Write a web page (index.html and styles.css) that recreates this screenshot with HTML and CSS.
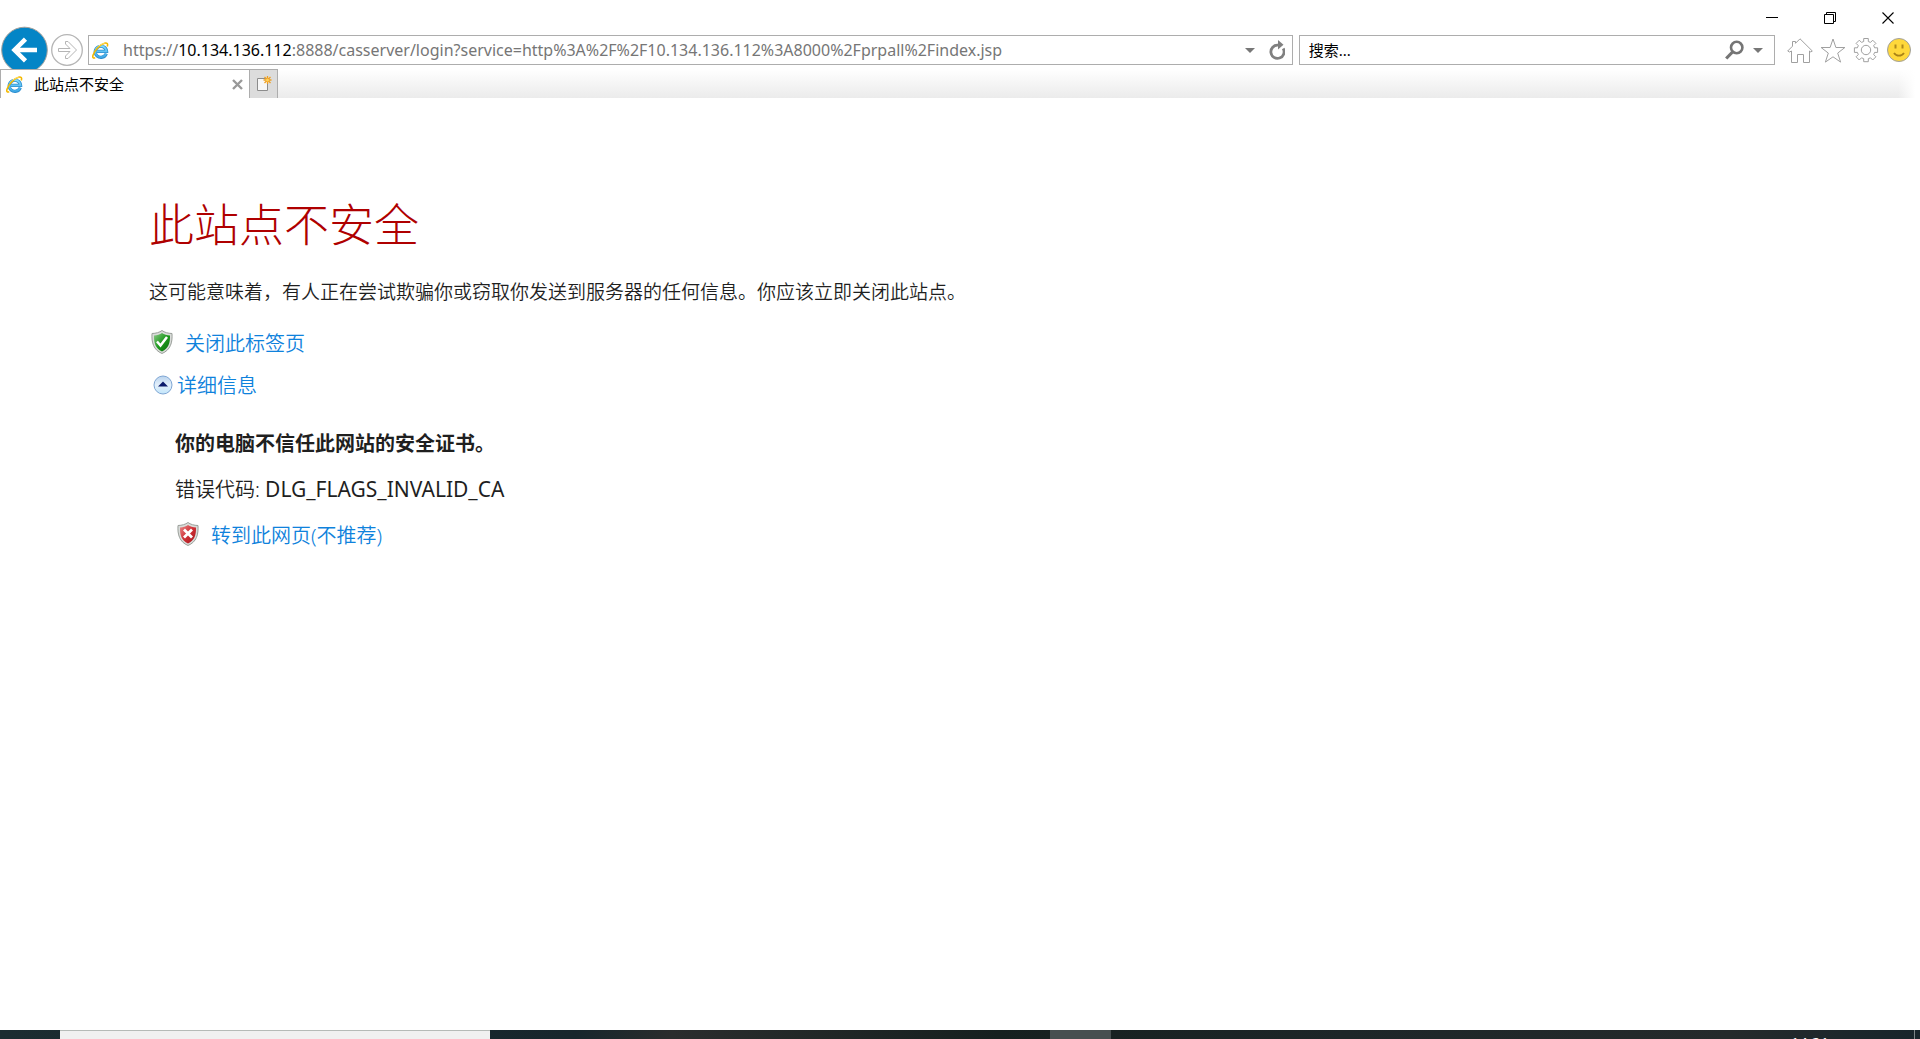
FILE: index.html
```
<!DOCTYPE html>
<html lang="zh-CN">
<head>
  <meta charset="UTF-8">
  <title>此站点不安全</title>
  <link rel="stylesheet" href="styles.css">
</head>
<body>
  <!-- shared icon symbols -->
  <svg class="symbols" aria-hidden="true">
    <defs>
      <linearGradient id="ieBlue" x1="0" y1="0" x2="0" y2="1">
        <stop offset="0" stop-color="#7fdcff"/>
        <stop offset="1" stop-color="#3fa9e6"/>
      </linearGradient>
      <linearGradient id="shieldGreen" x1="0" y1="0" x2="1" y2="1">
        <stop offset="0" stop-color="#8fc98b"/>
        <stop offset="0.5" stop-color="#1d9a1d"/>
        <stop offset="1" stop-color="#0a6b0e"/>
      </linearGradient>
      <linearGradient id="shieldRed" x1="0" y1="0" x2="1" y2="1">
        <stop offset="0" stop-color="#e88a8a"/>
        <stop offset="0.5" stop-color="#cf2f35"/>
        <stop offset="1" stop-color="#a3161c"/>
      </linearGradient>
      <linearGradient id="bubble" x1="0" y1="0" x2="0" y2="1">
        <stop offset="0" stop-color="#b9d3ee"/>
        <stop offset="0.5" stop-color="#e4f0fb"/>
        <stop offset="1" stop-color="#c2e6fb"/>
      </linearGradient>
      <symbol id="ie" viewBox="0 0 17 17">
        <path d="M14.300 11.600A5.700 5.500 0 1 1 14.600 9.400H5" fill="none" stroke="#2f8fd0" stroke-width="3.200"/>
        <path d="M14.200 11.600A5.700 5.500 0 1 1 14.600 9.400H5" fill="none" stroke="url(#ieBlue)" stroke-width="1.800"/>
        <path d="M3.200 15.600C1.400 16.600.3 15.800 1 13.200 2.400 8.500 7.800 2.600 12.600 1.200c2.300-.7 3.600.4 2.700 3.200" fill="none" stroke="#f3b800" stroke-width="1.600"/>
        <path d="M6.500 4.200C8.900 2.400 11.200 1.500 12.800 1.200" fill="none" stroke="#ffe270"/>
      </symbol>
      <symbol id="shield" viewBox="0 0 22 24">
        <path d="M11 .5C8.500 2.400 5 3.400 1 3.500c-.6 9 1.500 16.500 10 20 8.500-3.500 10.600-11 10-20C17 3.400 13.500 2.400 11 .5Z" fill="#d9dcd9" stroke="#9a9f9a"/>
      </symbol>
    </defs>
  </svg>

  <header class="browser">
    <div class="titlebar">
      <button type="button" aria-label="最小化">
        <svg width="12" height="12"><path d="M0 5.500h12" stroke="#000"/></svg>
      </button>
      <button type="button" aria-label="还原">
        <svg width="12" height="12" fill="none" stroke="#000"><path d="M.5 2.500h9v9h-9zM2.500 2.500v-2h9v9h-2"/></svg>
      </button>
      <button type="button" aria-label="关闭">
        <svg width="12" height="12"><path d="M.5.5l11 11M11.500.5l-11 11" stroke="#000" stroke-width="1.100"/></svg>
      </button>
    </div>

    <nav class="toolbar">
      <button type="button" class="back" aria-label="后退">
        <svg width="48" height="48" viewBox="0 0 48 48">
          <circle cx="24.500" cy="24" r="22.800" fill="#0485c6" stroke="#a3a09c"/>
          <path d="M37 24H15.500M25.500 13.200L14.500 24l11 10.800" fill="none" stroke="#fff" stroke-width="4.500"/>
        </svg>
      </button>
      <button type="button" class="forward" aria-label="前进">
        <svg width="32" height="32" viewBox="0 0 32 32" fill="none" stroke="#b5b5b5">
          <circle cx="16" cy="16" r="15.300" stroke-width="1.300"/>
          <path d="M7.500 14.500H19l-4.500-4.500V7.500h2.500l8.500 8.500-8.500 8.500h-2.500V22l4.500-4.500H7.500z"/>
        </svg>
      </button>

      <div class="address">
        <svg class="ie-icon" width="17" height="17"><use href="#ie"/></svg>
        <div class="url" role="textbox" aria-label="地址" contenteditable="true" spellcheck="false">https://<b>10.134.136.112</b>:8888/casserver/login?service=http%3A%2F%2F10.134.136.112%3A8000%2Fprpall%2Findex.jsp</div>
        <button type="button" aria-label="显示地址列表">
          <svg width="10" height="5"><path d="M0 0h10L5 5z" fill="#777"/></svg>
        </button>
        <button type="button" aria-label="刷新">
          <svg width="16" height="20" viewBox="0 0 16 20"><path d="M14.200 8.500A6.600 6.600 0 1 1 9 5.200" fill="none" stroke="#808080" stroke-width="2.800"/><path d="M9 0l5.500 4.700L9 9.500z" fill="#808080"/></svg>
        </button>
      </div>

      <form class="search">
        <input type="text" aria-label="搜索" placeholder="搜索...">
        <button type="submit" aria-label="搜索">
          <svg width="19" height="20" viewBox="0 0 19 20" fill="none" stroke="#757575"><circle cx="11.700" cy="7.500" r="5.700" stroke-width="2.600"/><path d="M7.500 12L1.200 18.500" stroke-width="3.200"/></svg>
        </button>
        <button type="button" aria-label="搜索选项">
          <svg width="10" height="5"><path d="M0 0h10L5 5z" fill="#777"/></svg>
        </button>
      </form>

      <div class="tools">
        <button type="button" aria-label="主页">
          <svg width="26" height="25" viewBox="0 0 26 25" fill="none" stroke="#a0a0a0"><path d="M13 .8L25.300 13l-1.500 1-1.300-1v11.500h-6v-8h-6v8h-6V13l-2 1-1.800-1L5.500 8.200V3.500h3v1.800z"/></svg>
        </button>
        <button type="button" aria-label="收藏夹">
          <svg width="26" height="25" viewBox="0 0 26 25" fill="none" stroke="#a0a0a0"><path d="M13 1l2.900 8.500h9l-7.200 5.600 2.900 9L13 18.800l-7.600 5.300 2.900-9L1.100 9.500h9z"/></svg>
        </button>
        <button type="button" aria-label="工具">
          <svg width="26" height="26" viewBox="0 0 26 26" fill="none" stroke="#a0a0a0"><path d="M10.700 1.500h4.600v3l2.200.9 2.200-2.200 3.200 3.200-2.200 2.200.9 2.200h3v4.600h-3l-.9 2.200 2.200 2.200-3.200 3.200-2.200-2.200-2.200.9v3h-4.600v-3l-2.200-.9-2.200 2.200-3.200-3.200 2.200-2.200-.9-2.200h-3v-4.600h3l.9-2.200-2.200-2.200 3.200-3.200 2.200 2.200 2.200-.9z"/><circle cx="13" cy="13" r="4.700"/></svg>
        </button>
        <button type="button" aria-label="反馈">
          <svg width="26" height="26" viewBox="0 0 26 26"><circle cx="13" cy="13" r="11.500" fill="#ffd83b" stroke="#a0a0a0"/><path d="M9.500 7.500v4M16.500 7.500v4" stroke="#b08a1c" stroke-width="2"/><path d="M8 16c2.500 3.600 7.500 3.600 10 0" fill="none" stroke="#a88217" stroke-width="1.800"/></svg>
        </button>
      </div>
    </nav>

    <div class="tabs">
      <div class="tab">
        <svg class="ie-icon" width="17" height="17"><use href="#ie"/></svg>
        <span class="tab-title">此站点不安全</span>
        <button type="button" aria-label="关闭标签页">
          <svg width="11" height="11"><path d="M1 1l9 9M10 1l-9 9" stroke="#999" stroke-width="2.400"/></svg>
        </button>
      </div>
      <button type="button" class="new-tab" aria-label="新建标签页">
        <svg width="16" height="16" viewBox="0 0 16 16">
          <path d="M1.500 2.500h10v12h-10z" fill="#f7f7f7" stroke="#8c8c8c"/>
          <path d="M11.500 0v8M7.500 4h8M8.500 1l6 6M14.500 1l-6 6" stroke="#f0a020" stroke-width="1.300"/>
          <circle cx="11.500" cy="4" r="1.500" fill="#ffd35c"/>
        </svg>
      </button>
    </div>
  </header>

  <main class="warning">
    <h1>此站点不安全</h1>
    <p class="intro">这可能意味着，有人正在尝试欺骗你或窃取你发送到服务器的任何信息。你应该立即关闭此站点。</p>
    <p class="action">
      <svg width="22" height="24" viewBox="0 0 22 24">
        <use href="#shield"/>
        <path d="M11 3C9 4.400 6 5.300 3 5.500 2.800 13 4.500 18.500 11 21.500c6.500-3 8.200-8.500 8-16C16 5.300 13 4.400 11 3Z" fill="url(#shieldGreen)"/>
        <path d="M6 11.500l3.500 4L16 7" fill="none" stroke="#fff" stroke-width="2.500"/>
      </svg>
      <a href="#close">关闭此标签页</a>
    </p>
    <p class="more">
      <svg width="20" height="20" viewBox="0 0 20 20">
        <circle cx="10" cy="10" r="9" fill="url(#bubble)" stroke="#7fa6d4"/>
        <path d="M5 11.500L10 6.500l5 5z" fill="#0b1a6b"/>
      </svg>
      <a href="#details">详细信息</a>
    </p>
    <section class="details" id="details">
      <h2>你的电脑不信任此网站的安全证书。</h2>
      <p class="error">错误代码: <span class="code">DLG_FLAGS_INVALID_CA</span></p>
      <p class="action">
        <svg width="22" height="24" viewBox="0 0 22 24">
          <use href="#shield"/>
          <path d="M11 3C9 4.400 6 5.300 3 5.500 2.800 13 4.500 18.500 11 21.500c6.500-3 8.200-8.500 8-16C16 5.300 13 4.400 11 3Z" fill="url(#shieldRed)"/>
          <path d="M7 7.500l8 8M15 7.500l-8 8" stroke="#fff" stroke-width="2.800"/>
        </svg>
        <a href="#continue">转到此网页(不推荐)</a>
      </p>
    </section>
  </main>

  <footer class="taskbar">
    <div class="task-search"></div>
    <div class="task-active"></div>
    <time class="clock">14:21</time>
    <div class="show-desktop"></div>
  </footer>
</body>
</html>
```

FILE: styles.css
```
* {
  box-sizing: border-box;
}
body {
  margin: 0;
  min-height: 100vh;
  display: flex;
  flex-direction: column;
  background: #fff;
  color: #1f1f1f;
  font-family: "Noto Sans", "Noto Sans CJK SC", sans-serif;
}
h1, h2, p {
  margin: 0;
}
svg {
  display: block;
  flex-shrink: 0;
}
button {
  display: flex;
  align-items: center;
  justify-content: center;
  padding: 0;
  border: none;
  background: none;
  cursor: pointer;
}
a {
  color: #0f82dc;
  text-decoration: none;
}
.symbols {
  position: absolute;
  width: 0;
  height: 0;
}

/* Browser window */
.titlebar {
  display: flex;
  justify-content: flex-end;
  height: 35px;
  padding-right: 3px;
}
.titlebar button {
  width: 58px;
}
.toolbar {
  display: flex;
  align-items: center;
  height: 34px;
  padding-bottom: 4px;
}
.back {
  margin: -9px 3px -9px 0;
}
.forward {
  margin-right: 5px;
}
.address,
.search {
  display: flex;
  align-items: center;
  height: 30px;
  border: 1px solid #adadad;
  background: #fff;
}
.address {
  flex: 21 1 0;
  min-width: 0;
  margin-right: 6px;
  padding: 0 7px 0 3px;
  gap: 14px;
}
.url {
  flex: 1;
  min-width: 0;
  overflow: hidden;
  white-space: nowrap;
  font-size: 16px;
  line-height: 28px;
  color: #767676;
  outline: none;
}
.url b {
  font-weight: normal;
  color: #000;
}
.search {
  flex: 8 1 0;
  min-width: 0;
  padding: 0 11px 0 9px;
  gap: 9px;
}
.search input {
  flex: 1;
  min-width: 0;
  padding: 0;
  border: none;
  outline: none;
  font-family: inherit;
  font-size: 15px;
}
.search input::placeholder {
  color: #000;
}
.tools {
  display: flex;
  align-items: center;
  gap: 7px;
  padding: 0 8px 0 12px;
}
.tabs {
  position: relative;
  display: flex;
  height: 29px;
  background: linear-gradient(to left, #fff 5px, transparent 22px), linear-gradient(#fff, #ebebeb);
}
.tab {
  display: flex;
  align-items: center;
  width: 250px;
  padding: 0 6px 0 5px;
  gap: 11px;
  border: 1px solid #adadad;
  border-bottom: none;
  background: #fff;
}
.tab-title {
  flex: 1;
  font-size: 15px;
  line-height: 28px;
  color: #000;
}
.new-tab {
  width: 28px;
  border: 1px solid #adadad;
  border-left: none;
  border-bottom: none;
  background: #dcdcdc;
}

/* Page */
.warning {
  flex: 1;
  padding: 95px 149px 40px;
  font-family: "Noto Sans CJK SC", sans-serif;
  font-size: 20px;
  font-weight: 350;
  line-height: 28px;
}
h1 {
  font-size: 45px;
  font-weight: 300;
  line-height: 60px;
  color: #af0000;
}
.intro {
  margin-top: 24px;
  font-size: 19px;
}
.action,
.more {
  display: flex;
  align-items: center;
}
.action {
  margin-top: 25px;
  padding-left: 2px;
  gap: 12px;
}
.action svg {
  margin-bottom: 4px;
}
.more {
  margin-top: 13px;
  padding-left: 4px;
  gap: 4px;
}
.details {
  margin-top: 30px;
  padding-left: 26px;
}
.details h2 {
  font-size: 20px;
  font-weight: bold;
  line-height: 28px;
}
.details p {
  margin-top: 18px;
}
.error,
.action a {
  font-family: "Noto Sans", "Noto Sans CJK SC", sans-serif;
}
.code {
  font-size: 21px;
  font-weight: normal;
}

/* Taskbar, cut off by the bottom of the screen */
.taskbar {
  display: flex;
  height: 9px;
  overflow: hidden;
  padding-left: 60px;
  background: linear-gradient(to right, #1b2d31, #17262c 30%, #2a2d2d 35%, #16201f 52%, #1d2628 70%, #252a2b 90%, #17252b);
}
.task-search {
  width: 430px;
  border-top: 1px solid #b5bab7;
  background: #f0f0f0;
}
.task-active {
  width: 61px;
  margin-left: 560px;
  background: #474f50;
}
.clock {
  margin-left: auto;
  padding-top: 2px;
  font-size: 15px;
  line-height: 20px;
  color: #fff;
}
.show-desktop {
  width: 6px;
  margin-left: 85px;
  border-left: 1px solid #7c8588;
}
```
